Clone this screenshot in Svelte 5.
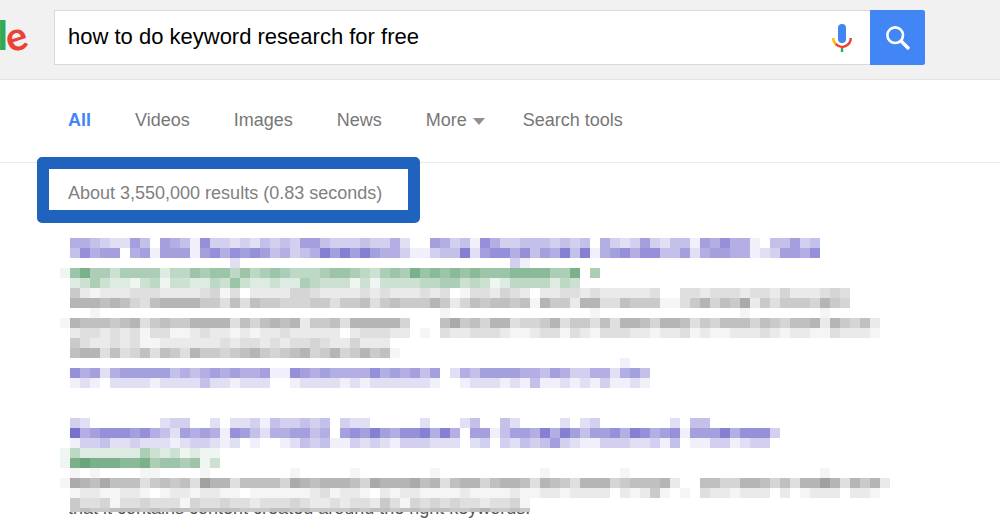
<script>
  const CELL = 10;

  const tones = {
    link: "#7770ce",
    url: "#6aa67c",
    text: "#a0a0a0",
  };

  // one digit per cell, 0 = empty, 9 = full tone
  const results = [
    [
      { tone: "link", cells: "0554322640654173323" + "24343664333433520065" + "34175334443434053236" + "324416575510446340" },
      { tone: "link", cells: "0475660561666167576" + "76453458686865531134" + "48267757465848156757" + "744625665512366570" },
      { tone: "link", cells: "0000000000000000020" + "00000000000000000000" + "00000031" },
      { tone: "url", cells: "1685535555244656646" + "45654445665435658676" + "767666777755805" },
      { tone: "url", cells: "0235322134133224363" + "22322543331313333445" + "5343124444243" },
      { tone: "text", cells: "0521222333222234130" + "22224432222323222323" + "01332432022332322222" + "30033233323324222343" },
      { tone: "text", cells: "0777676436777755363" + "65544455355635655575" + "24656656175527733655" + "51135746582535554754" },
      { tone: "text", cells: "0001000000000000000" + "00000000000000000001" + "00000000000000100000" + "000000000100000001" },
      { tone: "text", cells: "1766656735655777736" + "46767255637777740006" + "85647734457355363776" + "47763546664654667275462" },
      { tone: "text", cells: "0233232313311232212" + "12232222202333220103" + "22333211233132133322" + "12231211222321221132221" },
      { tone: "text", cells: "0532232311222222323" + "32323343224222" },
      { tone: "text", cells: "0677363463653755456" + "754567457457561" },
      { tone: "link", cells: "0000000000000000000" + "00000000000000000000" + "000000000000000001" },
      { tone: "link", cells: "0756256666645456565" + "56117656555575656460" + "25466665546533552564" },
      { tone: "link", cells: "0121022221222242212" + "22001222212122222210" + "01222121411212131121" },
    ],
    [
      { tone: "link", cells: "0320000000233002022" + "31433434032200000200" + "02400420000202300000" + "002044" },
      { tone: "link", cells: "0956777675426565176" + "42556645067686577858" + "50661466585864667587" + "5671666857773" },
      { tone: "link", cells: "0133422322212332120" + "10012434113232133322" + "20230324346321133322" + "3140113312330" },
      { tone: "url", cells: "14222222532312110" },
      { tone: "url", cells: "18988877856656130" },
      { tone: "text", cells: "0101000011000010000" + "00001000001000000010" + "00000000010000000100" + "000000000000000001" },
      { tone: "text", cells: "1876866635656397736" + "66648767776487778673" + "67746776376537774566" + "672006644776463779737572" },
      { tone: "text", cells: "0122112210122122110" + "11111123122102122111" + "12111121122122220212" + "510103221222020122202210" },
      { tone: "text", cells: "0533413343331433433" + "23334322323325314343" + "43323341" },
      { tone: "text", cells: "0565566656566566665" + "55665655556566566566" + "55675565", height: 4 },
    ],
  ];

  let query = "how to do keyword research for free";

  function blockHeight(rows) {
    return rows.reduce((sum, row) => sum + (row.height || CELL), 0);
  }
</script>

{#snippet mosaic(rows)}
  <svg class="mosaic" width="840" height={blockHeight(rows)} aria-hidden="true" shape-rendering="crispEdges">
    {#each rows as row, y}
      {#each row.cells as level, x}
        {#if level !== "0"}
          <rect
            x={x * CELL}
            y={y * CELL}
            width={CELL}
            height={row.height || CELL}
            fill={tones[row.tone]}
            fill-opacity={level / 9}
          />
        {/if}
      {/each}
    {/each}
  </svg>
{/snippet}

<header>
  <a class="logo" href="/"><span class="green">l</span><span class="red">e</span></a>
  <form on:submit|preventDefault>
    <input type="text" aria-label="Search" bind:value={query} />
    <button class="mic" type="button" aria-label="Search by voice">
      <svg width="20" height="28" viewBox="0 0 20 28" fill="none">
        <rect x="6" y="0" width="8" height="19" rx="4" fill="#4285f4" />
        <path d="M10 23v5" stroke="#34a853" stroke-width="2.4" />
        <path d="M1.2 14a8.8 8.8 0 0 0 3.2 6.8" stroke="#fbbc05" stroke-width="2.4" />
        <path d="M3.8 20.2a8.8 8.8 0 0 0 15-6.2" stroke="#ea4335" stroke-width="2.4" />
      </svg>
    </button>
    <button class="submit" type="submit" aria-label="Search">
      <svg width="24" height="24" viewBox="0 0 24 24" fill="none" stroke="#fff">
        <circle cx="9.2" cy="9.2" r="7.8" stroke-width="2.6" />
        <path d="M15 15l8 8" stroke-width="3.4" />
      </svg>
    </button>
  </form>
</header>

<nav>
  <a class="active" href="#all">All</a>
  <a href="#videos">Videos</a>
  <a href="#images">Images</a>
  <a href="#news">News</a>
  <button class="more" type="button">More <span class="caret"></span></button>
  <button type="button">Search tools</button>
</nav>

<main>
  <div class="stats">About 3,550,000 results (0.83 seconds)</div>
  <article>
    {@render mosaic(results[0])}
  </article>
  <article>
    {@render mosaic(results[1])}
    <p>that it contains content created around the right keywords.</p>
  </article>
</main>

<style>
  :global(body) {
    margin: 0;
    background: #fff;
    font-family: Arial, "Liberation Sans", sans-serif;
  }

  header {
    display: flex;
    box-sizing: border-box;
    height: 80px;
    padding: 10px 75px 14px 0;
    background: #f1f1f1;
    border-bottom: 1px solid #e3e3e3;
  }

  .logo {
    display: flex;
    flex: none;
    justify-content: flex-end;
    gap: 1px;
    width: 30px;
    margin-right: 24px;
    font-family: Lato, sans-serif;
    font-size: 40px;
    font-weight: 900;
    line-height: 50px;
    text-decoration: none;
  }

  .green {
    color: #34a853;
  }

  .red {
    color: #ea4335;
    font-weight: 700;
    transform: rotate(-18deg);
    transform-origin: 50% 70%;
  }

  form {
    display: flex;
    flex: 1;
    min-width: 0;
    background: #fff;
  }

  input {
    flex: 1;
    min-width: 0;
    border: 1px solid #d9d9d9;
    border-right: 0;
    padding: 0 13px 1px;
    background: #fff;
    color: #000;
    font: 22px Arial, "Liberation Sans", sans-serif;
    outline: none;
  }

  button {
    border: 0;
    padding: 0;
    background: none;
    font: inherit;
    color: inherit;
    cursor: pointer;
  }

  .mic {
    display: flex;
    align-items: center;
    justify-content: center;
    width: 56px;
    border: solid #d9d9d9;
    border-width: 1px 0;
  }

  .submit {
    display: flex;
    align-items: center;
    justify-content: center;
    width: 55px;
    background: #4285f4;
    border-radius: 0 2px 2px 0;
  }

  nav {
    display: flex;
    align-items: center;
    gap: 38px;
    height: 79px;
    padding: 0 0 3px 68px;
    border-bottom: 1px solid #ebebeb;
    color: #777;
    font-size: 18px;
    line-height: 20px;
  }

  nav a {
    padding-right: 6px;
    color: inherit;
    text-decoration: none;
  }

  nav .active {
    color: #4285f4;
    font-weight: 700;
  }

  .more {
    display: flex;
    align-items: center;
    gap: 6px;
  }

  .caret {
    margin-top: 3px;
    border: solid transparent;
    border-width: 7px 6px 0;
    border-top-color: #909090;
  }

  main {
    padding: 20px 0 0 60px;
  }

  .stats {
    position: relative;
    width: fit-content;
    margin: 0 0 35px 8px;
    color: #808080;
    font-size: 18px;
    line-height: 20px;
  }

  .stats::after {
    content: "";
    position: absolute;
    inset: -26px -38px -20px -31px;
    border: 12px solid #1f63be;
    border-bottom-width: 13px;
    border-radius: 5px;
  }

  article + article {
    margin-top: 30px;
  }

  .mosaic {
    display: block;
    position: relative;
    background: #fff;
  }

  p {
    margin: -14px 0 0 8px;
    color: #545454;
    font-size: 18px;
    line-height: 20px;
  }
</style>
